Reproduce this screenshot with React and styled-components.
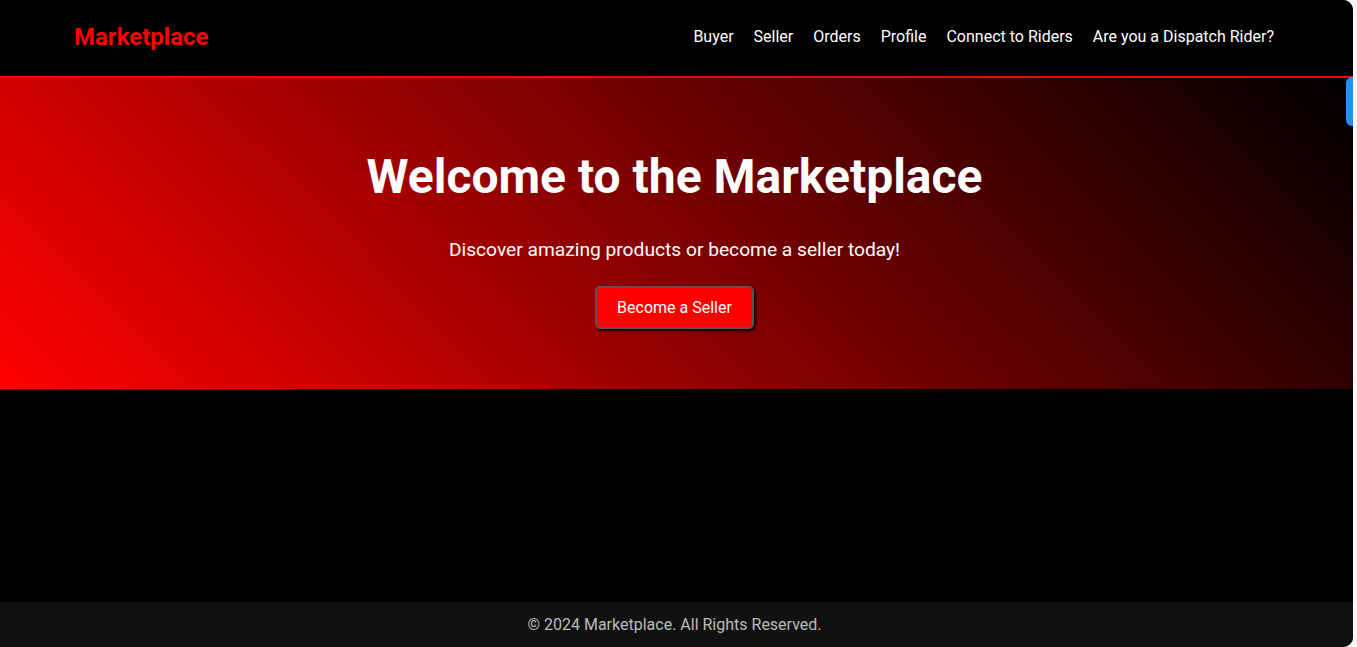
import React from 'react';
import styled, { createGlobalStyle } from 'styled-components';

const GlobalStyle = createGlobalStyle`
    * {
        box-sizing: border-box;
    }
    body {
        margin: 0;
        background-color: #f7f7f7;
        font-family: Roboto, "Liberation Sans", Arial, sans-serif;
    }
`;

const Page = styled.div`
    position: relative;
    display: flex;
    flex-direction: column;
    width: calc(100% - 4px);
    min-height: 100vh;
    background-color: #000000;
    color: #ffffff;
    border-radius: 0 10px 10px 0;
    overflow: hidden;
`;

const Header = styled.header`
    display: flex;
    align-items: center;
    justify-content: space-between;
    height: 78px;
    padding: 0 79px 3px 74px;
    background-color: #000000;
    border-bottom: 2px solid #ff0000;
`;

const Logo = styled.div`
    color: #ff0000;
    font-size: 24px;
    font-weight: 700;
`;

const Nav = styled.nav`
    display: flex;
    gap: 20px;
`;

const NavLink = styled.a`
    color: #ffffff;
    font-size: 16px;
    text-decoration: none;
`;

const Hero = styled.section`
    display: flex;
    flex-direction: column;
    align-items: center;
    height: 311px;
    padding: 70px 24px 60px 20px;
    background: linear-gradient(45deg, #ff0000, #000000);
    text-align: center;
`;

const Title = styled.h1`
    margin: 0 0 33px;
    font-size: 48px;
    font-weight: 700;
    line-height: normal;
`;

const Lead = styled.p`
    margin: 0 0 25px;
    font-size: 19.2px;
`;

const Button = styled.button`
    padding: 10px 20px;
    background-color: #ff0000;
    color: #ffffff;
    font-family: inherit;
    font-size: 16px;
    border: 2px solid #555555;
    border-radius: 5px;
    box-shadow: 2px 2px 3px rgba(0, 0, 0, 0.8);
    cursor: pointer;
`;

const Main = styled.main`
    flex: 1;
`;

const Footer = styled.footer`
    height: 45px;
    display: flex;
    align-items: center;
    justify-content: center;
    padding-right: 4px;
    background-color: #111111;
    color: #bbbbbb;
    font-size: 16px;
`;

const SideTab = styled.div`
    position: absolute;
    top: 77px;
    right: 0;
    width: 7px;
    height: 49px;
    background-color: #1e90ff;
    border-radius: 6px 0 0 6px;
`;

const links = ['Buyer', 'Seller', 'Orders', 'Profile', 'Connect to Riders', 'Are you a Dispatch Rider?'];

function App() {
    return (
        <>
            <GlobalStyle />
            <Page>
                <Header>
                    <Logo>Marketplace</Logo>
                    <Nav>
                        {links.map((l) => (
                            <NavLink key={l} href="#">{l}</NavLink>
                        ))}
                    </Nav>
                </Header>
                <Hero>
                    <Title>Welcome to the Marketplace</Title>
                    <Lead>Discover amazing products or become a seller today!</Lead>
                    <Button>Become a Seller</Button>
                </Hero>
                <Main />
                <Footer>© 2024 Marketplace. All Rights Reserved.</Footer>
                <SideTab />
            </Page>
        </>
    );
}

export default App;
